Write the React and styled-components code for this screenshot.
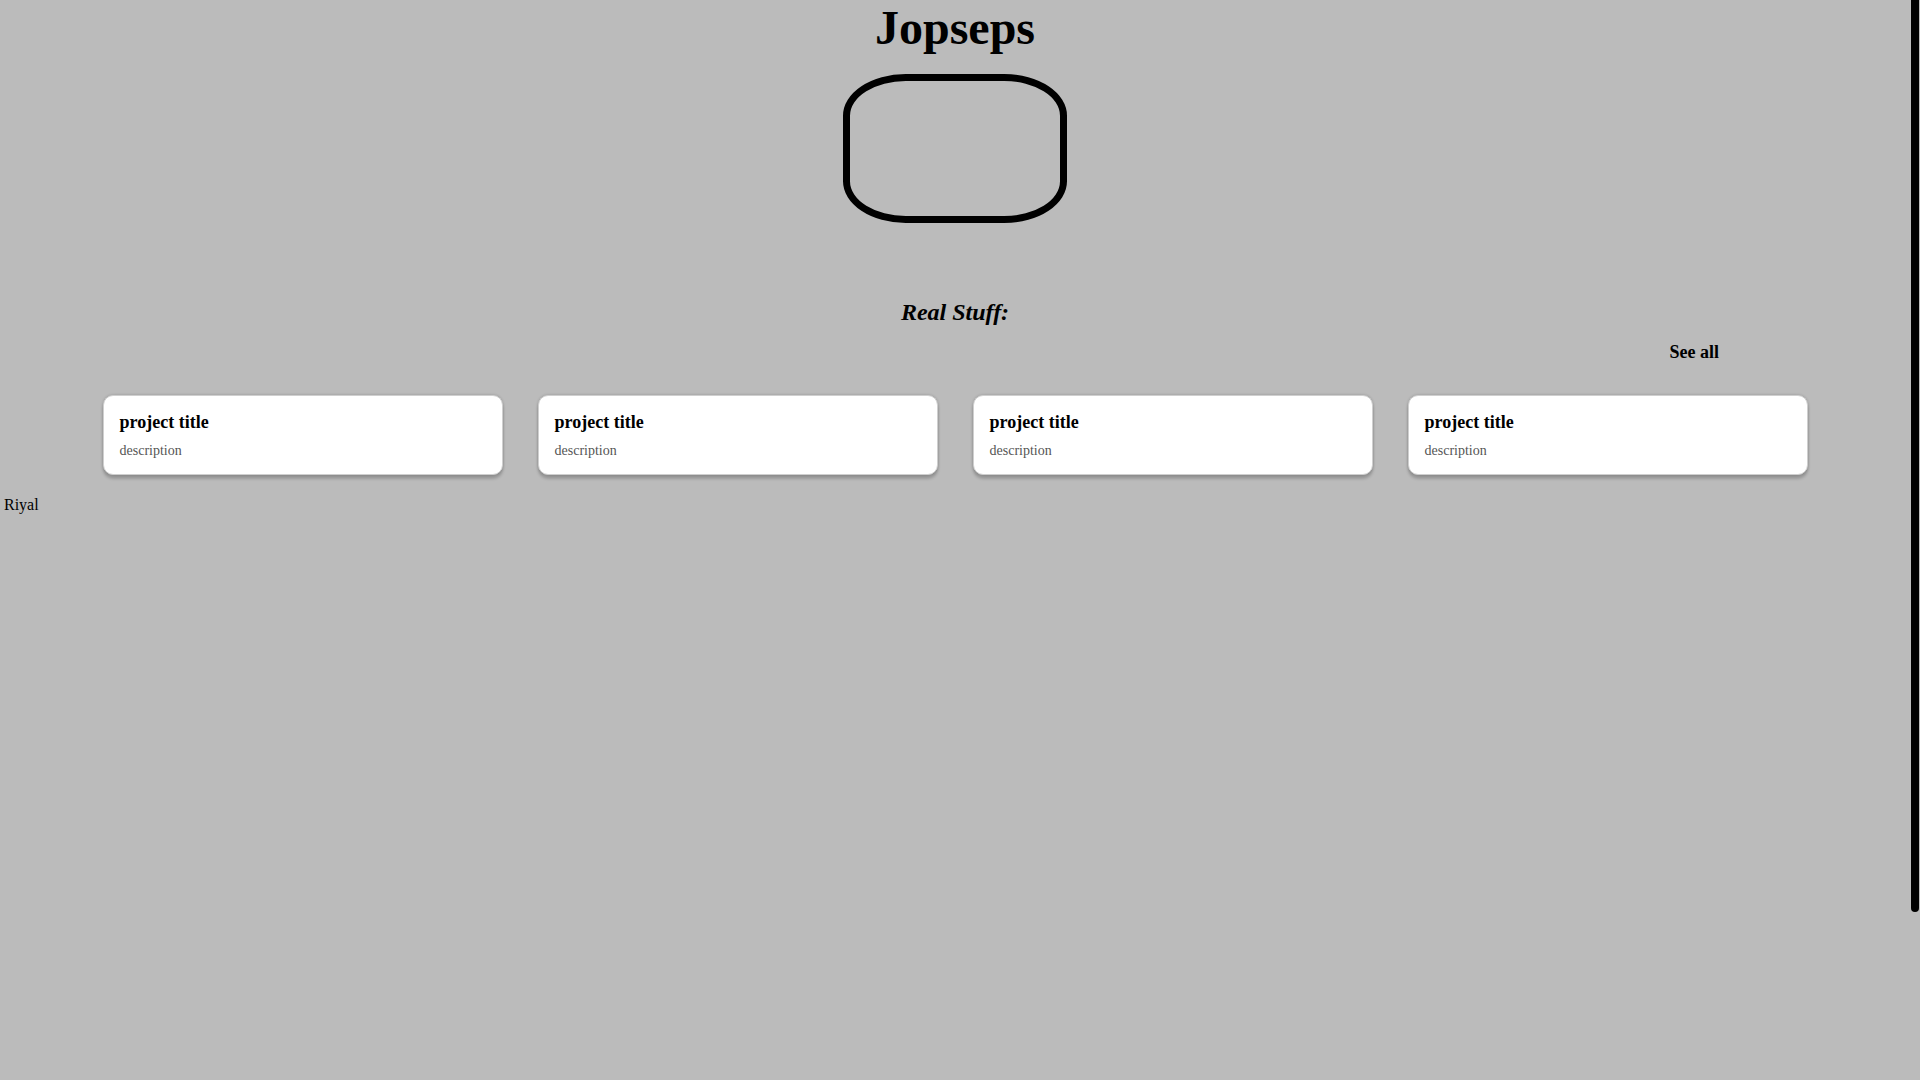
import React from "react";
import styled, { createGlobalStyle } from "styled-components";

const projects = [
  { title: "project title", description: "description" },
  { title: "project title", description: "description" },
  { title: "project title", description: "description" },
  { title: "project title", description: "description" },
];

const App = () => {
  return (
    <>
      <GlobalStyle />
      <Viewport>
        <Page>
          <Header>
            <Title>Jopseps</Title>
            <Logo />
          </Header>
          <Section>
            <SectionTitle>Real Stuff:</SectionTitle>
            <SeeAll>See all</SeeAll>
            <CardRow>
              {projects.map((project, index) => (
                <Card key={index}>
                  <CardTitle>{project.title}</CardTitle>
                  <CardDescription>{project.description}</CardDescription>
                </Card>
              ))}
            </CardRow>
          </Section>
          <Footer>Riyal</Footer>
        </Page>
        <ScrollRail>
          <ScrollThumb />
        </ScrollRail>
      </Viewport>
    </>
  );
};

export default App;

const GlobalStyle = createGlobalStyle`
  html, body {
    margin: 0;
    padding: 0;
    height: 100%;
    overflow: hidden;
    background-color: #bbbbbb;
    font-family: "Liberation Serif", "Times New Roman", serif;
    color: #000;
  }
`;

const Viewport = styled.div`
  display: flex;
  height: 100vh;
  overflow: hidden;
`;

const Page = styled.div`
  flex: 1;
  min-width: 0;
`;

const ScrollRail = styled.div`
  flex: none;
  width: 10px;
  display: flex;
  justify-content: center;
  background-color: #bbbbbb;
`;

const ScrollThumb = styled.div`
  width: 8px;
  height: 912px;
  background-color: #000;
  border-radius: 0 0 4px 4px;
`;

const Header = styled.header`
  display: flex;
  flex-direction: column;
  align-items: center;
`;

const Title = styled.h1`
  margin: 0;
  font-size: 48px;
  font-weight: bold;
`;

const Logo = styled.div`
  margin-top: 19px;
  width: 210px;
  height: 135px;
  border: 7px solid #000;
  border-radius: 28%;
`;

const Section = styled.section`
  display: flex;
  flex-direction: column;
`;

const SectionTitle = styled.h2`
  margin: 76px 0 0;
  font-size: 24px;
  font-style: italic;
  font-weight: bold;
  text-align: center;
`;

const SeeAll = styled.a`
  display: block;
  width: 90%;
  margin-top: 16px;
  font-size: 18px;
  font-weight: bold;
  text-align: right;
  cursor: pointer;
`;

const CardRow = styled.div`
  display: flex;
  justify-content: center;
  gap: 35px;
  margin-top: 32px;
`;

const Card = styled.div`
  width: 400px;
  box-sizing: border-box;
  padding: 16px 16px 15px;
  background-color: #fff;
  border: 1px solid #cfcfcf;
  border-radius: 10px;
  box-shadow: 0 0 3px rgba(0, 0, 0, 0.2), 0 4px 3px rgba(0, 0, 0, 0.18);
`;

const CardTitle = styled.h3`
  margin: 0;
  font-size: 18px;
  font-weight: bold;
`;

const CardDescription = styled.p`
  margin: 9.5px 0 0;
  font-size: 14px;
  color: #555;
`;

const Footer = styled.footer`
  margin-top: 21px;
  padding-left: 4px;
  font-size: 16px;
`;
